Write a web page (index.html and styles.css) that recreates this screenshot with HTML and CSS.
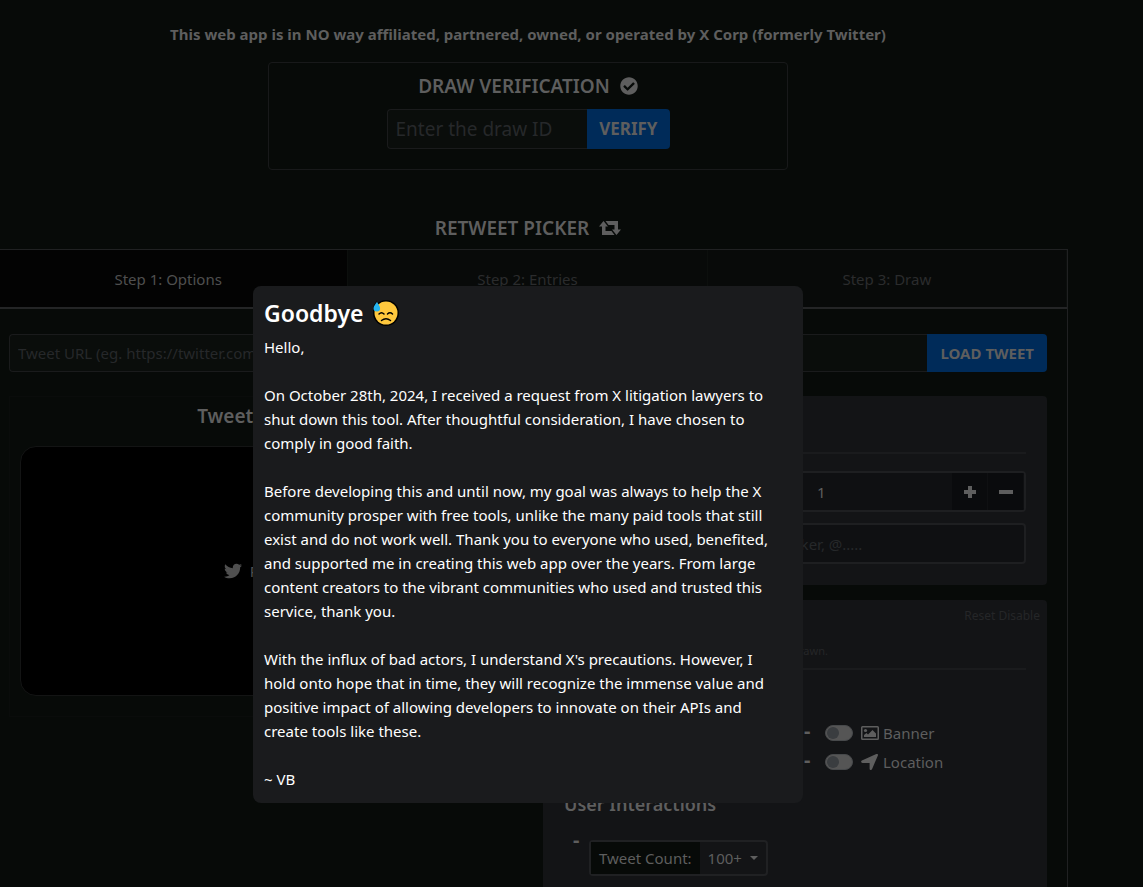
FILE: index.html
```html
<!DOCTYPE html>
<html lang="en">
<head>
    <meta charset="UTF-8">
    <meta name="viewport" content="width=device-width, initial-scale=1.0">
    <title>Retweet Picker</title>
    <link rel="stylesheet" href="styles.css">
</head>
<body>
    <main class="page">
        <p class="notice">This web app is in NO way affiliated, partnered, owned, or operated by X Corp (formerly Twitter)</p>

        <form class="verify">
            <h2 class="title">
                <label for="drawId">DRAW VERIFICATION</label>
                <svg class="icon-check" viewBox="0 0 512 512"><path d="M504 256c0 137-111 248-248 248S8 393 8 256 119 8 256 8s248 111 248 248zM227.300 387.300l184-184c6.200-6.200 6.200-16.400 0-22.600l-22.600-22.600c-6.200-6.200-16.400-6.200-22.600 0L216 308.100l-70.100-70.100c-6.200-6.200-16.400-6.200-22.600 0l-22.600 22.600c-6.200 6.200-6.200 16.400 0 22.600l104 104c6.200 6.300 16.400 6.300 22.600.1z"/></svg>
            </h2>
            <div class="input-group large">
                <input type="text" id="drawId" placeholder="Enter the draw ID">
                <button type="button" class="btn">VERIFY</button>
            </div>
        </form>

        <h1 class="title picker-title">
            RETWEET PICKER
            <svg class="icon-retweet" viewBox="0 0 22 14"><path d="M4.500 0 9 5.500H6.500v4.500h6l3 4H3V5.500H0zM6.500 0H19v8.500h3L17.500 14 13 8.500h2.500V4h-6z"/></svg>
        </h1>

        <section class="panel">
            <nav class="tabs">
                <button type="button" class="tab active">Step 1: Options</button>
                <button type="button" class="tab">Step 2: Entries</button>
                <button type="button" class="tab">Step 3: Draw</button>
            </nav>

            <div class="panel-body">
                <div class="input-group">
                    <input type="text" aria-label="Tweet URL" placeholder="Tweet URL (eg. https://twitter.com/user/status/1234)">
                    <button type="button" class="btn">LOAD TWEET</button>
                </div>

                <div class="columns">
                    <div class="preview">
                        <h2 class="title">Tweet Preview</h2>
                        <div class="tweet">
                            <svg class="icon-bird" viewBox="0 0 512 512"><path d="M459.400 151.700c.3 4.500.3 9.100.3 13.600 0 138.700-105.600 298.600-298.600 298.600-59.500 0-114.700-17.200-161.100-47.100 8.400 1 16.600 1.300 25.300 1.300 49.100 0 94.200-16.600 130.300-44.800-46.100-1-84.800-31.200-98.100-72.800 6.500 1 13 1.600 19.800 1.600 9.400 0 18.800-1.300 27.600-3.600-48.100-9.700-84.100-52-84.100-103v-1.300c14 7.800 30.200 12.700 47.400 13.300-28.300-18.800-46.800-51-46.800-87.400 0-19.500 5.200-37.400 14.300-53 51.700 63.700 129.300 105.300 216.400 109.800-1.600-7.800-2.600-15.900-2.600-24 0-57.800 46.800-104.900 104.900-104.900 30.200 0 57.500 12.700 76.700 33.100 23.700-4.500 46.500-13.300 66.600-25.300-7.800 24.400-24.400 44.800-46.100 57.800 21.100-2.300 41.600-8.100 60.400-16.200-14.300 20.800-32.200 39.300-52.600 54.300z"/></svg>
                            Preview
                        </div>
                    </div>

                    <div class="options">
                        <div class="card draw-options">
                            <hr>
                            <div class="stepper">
                                <input type="text" aria-label="Number of winners" value="1">
                                <button type="button" aria-label="More winners"><svg viewBox="0 0 14 14"><path d="M5 1h4v4h4v4H9v4H5V9H1V5h4z"/></svg></button>
                                <button type="button" aria-label="Fewer winners"><svg viewBox="0 0 14 14"><path d="M0 5h14v4H0z"/></svg></button>
                            </div>
                            <input type="text" class="exclude" aria-label="Excluded users" placeholder="Excluded users, eg. @retweetpicker, @.....">
                        </div>

                        <div class="card filters">
                            <div class="links"><a href="#">Reset</a> <a href="#">Disable</a></div>
                            <p class="hint">Only entries matching every filter below are drawn.</p>
                            <hr>
                            <h3>User Profile</h3>
                            <ul class="toggles">
                                <li><label><input type="checkbox"> Avatar</label></li>
                                <li><label><input type="checkbox">
                                    <svg viewBox="0 0 18 16"><path fill-rule="evenodd" d="M1.500 1h15A1.500 1.500 0 0 1 18 2.500v11a1.500 1.500 0 0 1-1.500 1.500h-15A1.500 1.500 0 0 1 0 13.500v-11A1.500 1.500 0 0 1 1.500 1zm0 1.500v11h15v-11z"/><circle cx="4.500" cy="5.500" r="1.600"/><path d="M3 12v-2l2.500-2L7 9.500 11.500 5 15 8.500V12z"/></svg>
                                    Banner</label></li>
                                <li><label><input type="checkbox"> Bio</label></li>
                                <li><label><input type="checkbox">
                                    <svg viewBox="0 0 18 16"><path d="M16 0c.8 0 1.200.7.900 1.400L11 15.200c-.6 1.300-2.400.9-2.400-.5V8.900H1.500C0 8.900-.4 7 .9 6.400L15.300.1z"/></svg>
                                    Location</label></li>
                            </ul>
                            <h3>User Interactions</h3>
                            <ul class="counts">
                                <li>
                                    <div class="count">
                                        <label for="tweetCount">Tweet Count:</label>
                                        <select id="tweetCount">
                                            <option>100+</option>
                                            <option>500+</option>
                                        </select>
                                        <span class="caret"></span>
                                    </div>
                                </li>
                            </ul>
                        </div>
                    </div>
                </div>
            </div>
        </section>
    </main>

    <div class="overlay">
        <div class="modal" role="dialog" aria-labelledby="modalTitle">
            <h2 id="modalTitle">
                Goodbye
                <svg class="emoji" viewBox="0 0 27 28">
                    <path d="M5 1 1 8v5z" fill="#000"/>
                    <circle cx="14" cy="14" r="13" fill="#000"/>
                    <circle cx="14" cy="14" r="11.500" fill="#ffc83d"/>
                    <path d="M5 3C3 5.500 1.500 7.500 1.500 9.200a3.300 3.300 0 0 0 6.600 0C8.100 7.500 6.500 5.500 5 3z" fill="#26b5f0"/>
                    <path d="M7 15q2.500-2.500 5 0M15.500 15q2.500-2.500 5 0M9.500 21.500q4.500-3.500 9 0" fill="none" stroke="#000" stroke-width="1.500" stroke-linecap="round"/>
                </svg>
            </h2>
            <p>Hello,</p>
            <p>On October 28th, 2024, I received a request from X litigation lawyers to shut down this tool. After thoughtful consideration, I have chosen to comply in good faith.</p>
            <p>Before developing this and until now, my goal was always to help the X community prosper with free tools, unlike the many paid tools that still exist and do not work well. Thank you to everyone who used, benefited, and supported me in creating this web app over the years. From large content creators to the vibrant communities who used and trusted this service, thank you.</p>
            <p>With the influx of bad actors, I understand X's precautions. However, I hold onto hope that in time, they will recognize the immense value and positive impact of allowing developers to innovate on their APIs and create tools like these.</p>
            <p>~ VB</p>
        </div>
    </div>
</body>
</html>
```
FILE: styles.css
```css
* {
    box-sizing: border-box;
}

body {
    margin: 0;
    height: 100vh;
    overflow: hidden;
    background: #070a08;
    color: #5e5e5e;
    font-family: "Noto Sans", "Open Sans", sans-serif;
    font-size: 15px;
    line-height: 24px;
}

input, button, select {
    font: inherit;
    color: inherit;
    margin: 0;
}

h1, h2, h3, p, ul {
    margin: 0;
    padding: 0;
}

svg {
    fill: currentColor;
}

.page {
    margin: 0 75px 0 -12px;
    padding-top: 22px;
}

.notice {
    text-align: center;
    font-weight: bold;
}

.title {
    display: flex;
    justify-content: center;
    align-items: center;
    gap: 10px;
    font-size: 19px;
    font-weight: 600;
    line-height: 24px;
}

.verify {
    max-width: 520px;
    height: 108px;
    margin: 16px auto 0;
    padding-top: 11px;
    border: 1px solid #18191a;
    border-radius: 4px;
}

.icon-check {
    width: 18px;
    height: 18px;
}

.icon-retweet {
    width: 22px;
    height: 14px;
}

.input-group {
    display: flex;
    height: 38px;
}

.input-group input {
    flex: 1;
    min-width: 0;
    padding: 0 8px;
    background: #0a0d0b;
    border: 1px solid #1a1b1c;
    border-right: none;
    border-radius: 4px 0 0 4px;
}

.input-group.large {
    width: 283px;
    height: 40px;
    margin: 11px auto 0;
}

.input-group.large input {
    font-size: 19px;
}

::placeholder {
    color: #26282a;
    opacity: 1;
}

.btn {
    padding: 0 13px;
    border: none;
    border-radius: 0 4px 4px 0;
    background: #002b59;
    font-weight: bold;
}

.large .btn {
    padding: 0 12px;
    font-size: 17px;
}

.picker-title {
    margin: 46px 0 9px;
}

.panel {
    border: 1px solid #202122;
    border-bottom: none;
}

.tabs {
    display: flex;
    border-bottom: 2px solid #242526;
}

.tab {
    flex: 1;
    height: 57px;
    border: none;
    border-right: 1px solid #0c0f0d;
    background: #080a09;
    color: #2b2c2d;
}

.tab.active {
    background: #030303;
    color: #4f4f4f;
}

.panel-body {
    padding: 25px 20px 0;
}

.columns {
    display: grid;
    grid-template-columns: 510px minmax(0, 1fr);
    gap: 24px;
    align-items: start;
    margin-top: 24px;
}

.preview {
    padding: 7px 10px 20px;
    border: 1px solid #0a0c0b;
}

.tweet {
    display: flex;
    justify-content: center;
    align-items: center;
    gap: 8px;
    height: 250px;
    margin-top: 18px;
    background: #000;
    border: 1px solid #131414;
    border-radius: 16px;
    color: #4f4f4f;
}

.icon-bird {
    width: 18px;
    height: 18px;
}

.card {
    padding: 4px 21px 21px;
    background: #131416;
    border-radius: 4px;
}

.card hr {
    margin: 5px 0 17px;
    border: none;
    border-top: 2px solid #1a1b1d;
}

.draw-options {
    padding-top: 51px;
}

.stepper {
    display: flex;
    height: 41px;
    border: 2px solid #1e1f21;
    border-radius: 4px;
    background: #0f1012;
    overflow: hidden;
}

.stepper input {
    flex: 1;
    min-width: 0;
    padding: 0 0 0 251px;
    border: none;
    background: none;
}

.stepper button {
    width: 36px;
    padding: 0;
    border: none;
    border-right: 1px solid #0f1012;
    background: #0a0b0d;
}

.stepper svg {
    display: block;
    width: 14px;
    height: 14px;
    margin: 0 auto;
}

.exclude {
    width: 100%;
    height: 41px;
    margin-top: 11px;
    padding: 0 8px;
    border: 2px solid #1e1f21;
    border-radius: 4px;
    background: #0f1012;
}

.filters {
    margin-top: 15px;
}

.links {
    margin-right: -14px;
    text-align: right;
    font-size: 12px;
}

.links a {
    color: #252628;
    text-decoration: none;
}

.hint {
    margin-top: 11px;
    font-size: 11px;
    color: #252628;
}

h3 {
    font-size: 18px;
    font-weight: 600;
    line-height: 24px;
}

.toggles, .counts {
    list-style: none;
}

.toggles {
    display: grid;
    grid-template-columns: 1fr 1fr;
    row-gap: 5px;
    margin: 10px 0 18px;
}

.toggles li, .counts li {
    display: flex;
    padding-left: 9px;
}

.toggles li::before, .counts li::before {
    content: "-";
    width: 16px;
    font-size: 20px;
    font-weight: bold;
    line-height: 20px;
}

.toggles li::before {
    width: 21px;
}

.toggles label {
    display: flex;
    align-items: center;
    gap: 4px;
}

.toggles svg {
    width: 18px;
    height: 16px;
}

.toggles input {
    appearance: none;
    width: 28px;
    height: 16px;
    margin-right: 4px;
    padding: 1px;
    border: 1px solid #47494b;
    border-radius: 8px;
    background: #555;
}

.toggles input::before {
    content: "";
    display: block;
    width: 12px;
    height: 12px;
    border-radius: 50%;
    background: #3a3d40;
}

.counts {
    margin-top: 24px;
    padding-bottom: 40px;
}

.counts li::before {
    line-height: 0;
}

.count {
    display: flex;
    align-items: center;
    height: 36px;
    border: 2px solid #202123;
    border-radius: 4px;
}

.count label {
    padding: 4px 8px;
    background: #070a08;
}

.count select {
    appearance: none;
    width: 50px;
    padding: 0 0 0 8px;
    border: none;
    background: none;
}

.caret {
    margin-right: 8px;
    border: 4px solid transparent;
    border-top-color: #5e5e5e;
    border-bottom: none;
}

/* Goodbye message */
.overlay {
    position: absolute;
    inset: 0 75px 0 -12px;
    display: flex;
    justify-content: center;
    align-items: flex-start;
    padding-top: 286px;
}

.modal {
    width: 550px;
    padding: 11px 24px 12px 11px;
    background: #1a1b1d;
    border-radius: 8px;
    color: #fff;
}

.modal h2 {
    display: flex;
    align-items: center;
    gap: 9px;
    margin-bottom: 6px;
    font-size: 23px;
    font-weight: 600;
    line-height: 32px;
}

.modal p + p {
    margin-top: 24px;
}

.emoji {
    width: 27px;
    height: 28px;
}
```
